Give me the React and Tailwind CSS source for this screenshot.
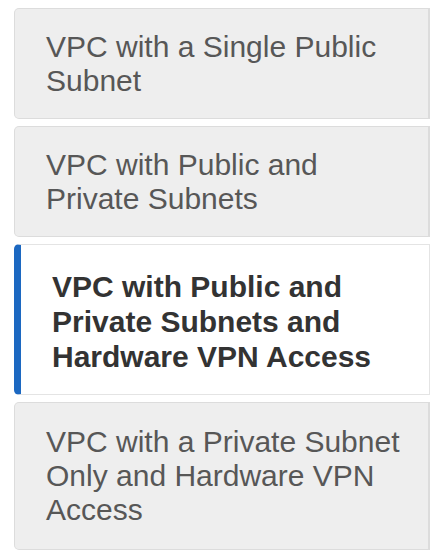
const options = [
  { id: "single-public", label: "VPC with a Single Public Subnet" },
  { id: "public-private", label: "VPC with Public and Private Subnets" },
  {
    id: "public-private-vpn",
    label: "VPC with Public and Private Subnets and Hardware VPN Access",
  },
  {
    id: "private-vpn",
    label: "VPC with a Private Subnet Only and Hardware VPN Access",
    tall: true,
  },
];

function OptionCard({ label, selected, tall }) {
  if (selected) {
    return (
      <div className="rounded-l-[5px] border border-l-[7px] border-[#e4e4e4] border-l-[#1c68c1] bg-white pl-[31px] pr-4 pt-[24px] pb-[20px]">
        <div className="text-[30px] leading-[35px] font-bold text-[#333333]">
          {label}
        </div>
      </div>
    );
  }

  return (
    <div
      className={
        tall
          ? "rounded-l-[5px] border border-r-2 border-[#dcdcdc] bg-[#eeeeee] pl-[31px] pr-4 pt-[22px] pb-[22px]"
          : "rounded-l-[5px] border border-r-2 border-[#dcdcdc] bg-[#eeeeee] pl-[31px] pr-4 pt-[21px] pb-[20px]"
      }
    >
      <div className="text-[30px] leading-[34px] text-[#575757]">{label}</div>
    </div>
  );
}

export default function App() {
  const selectedId = "public-private-vpn";

  return (
    <div
      className="w-[438px] h-[552px] overflow-hidden bg-white pl-[14px] pt-[8px]"
      style={{ fontFamily: '"Liberation Sans", Arial, sans-serif' }}
    >
      <div className="w-[416px] flex flex-col gap-[7px]">
        {options.map((opt) => (
          <OptionCard
            key={opt.id}
            label={opt.label}
            selected={opt.id === selectedId}
            tall={opt.tall}
          />
        ))}
      </div>
    </div>
  );
}
